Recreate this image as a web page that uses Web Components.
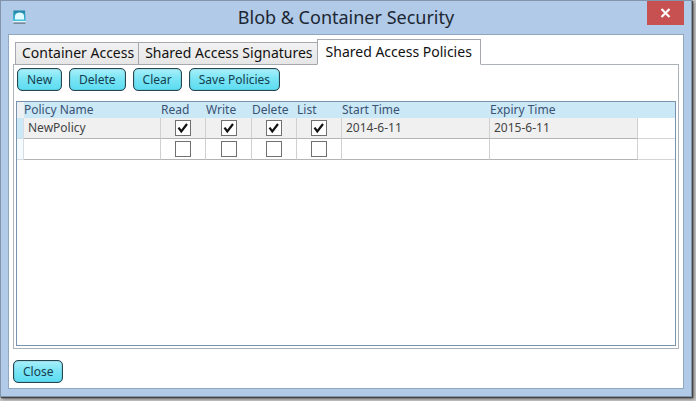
<!DOCTYPE html>
<html lang="en">
<head>
<meta charset="utf-8">
<title>Blob &amp; Container Security</title>
<style>
html, body { height: 100%; }
body { margin: 0; background: #c9c9c9; font-family: "Noto Sans", "Open Sans", sans-serif; font-size: 12px; color: #222; }
</style>
</head>
<body>
<app-window heading="Blob &amp; Container Security">
  <tab-group>
    <tab-item slot="tabs">Container Access</tab-item>
    <tab-item slot="tabs">Shared Access Signatures</tab-item>
    <tab-item slot="tabs" active>Shared Access Policies</tab-item>
    <tool-bar>
      <glossy-button>New</glossy-button>
      <glossy-button>Delete</glossy-button>
      <glossy-button>Clear</glossy-button>
      <glossy-button>Save Policies</glossy-button>
    </tool-bar>
    <policy-grid></policy-grid>
  </tab-group>
  <glossy-button slot="footer">Close</glossy-button>
</app-window>
<script>
function define(name, html, setup) {
  const template = document.createElement('template');
  template.innerHTML = html;
  customElements.define(name, class extends HTMLElement {
    constructor() {
      super();
      this.attachShadow({ mode: 'open' }).append(template.content.cloneNode(true));
    }
    connectedCallback() { if (setup) setup(this, this.shadowRoot); }
  });
}

define('app-window', `
<style>
:host { display: block; box-sizing: border-box; height: 100%; padding: 0 4px 4px 0; }
.frame { box-sizing: border-box; height: 100%; display: flex; flex-direction: column; background: #b0cae8; border: 1px solid #8295aa; padding: 0 7px 7px; box-shadow: 1px 1px 1px #444, 2px 2px 3px #666; }
header { flex: none; height: 33px; display: grid; grid-template-columns: 60px 1fr 60px; box-sizing: border-box; }
svg { display: block; }
.logo { margin: 8px 0 0 4px; }
h1 { margin: 0; text-align: center; font-size: 18px; line-height: 32px; font-weight: 400; color: #1c2733; white-space: nowrap; }
.close { justify-self: end; width: 37px; height: 24px; padding: 0; border: 0; background: #c75050; display: grid; place-items: center; }
main { flex: 1; min-height: 0; display: flex; flex-direction: column; background: #fff; border: 1px solid #91a7c0; box-sizing: border-box; padding: 4px 4px 5px; }
footer { flex: none; padding: 11px 0 0; display: flex; }
</style>
<div class="frame">
  <header>
    <svg class="logo" width="15" height="17" viewBox="0 0 15 17" aria-hidden="true">
      <defs><linearGradient id="g" x2="0" y2="1"><stop stop-color="#1e83a5"/><stop offset="1" stop-color="#48c4e2"/></linearGradient></defs>
      <path d="M1.500 1.500h11.500l.8 10.500H.8z" fill="url(#g)"/>
      <path d="M3 10.500V6.500Q3.500 4 7.300 3.500q4.200 0 4.700 3v4z" fill="#e2fbff"/>
      <path d="M.8 12h13v1.500H.8z" fill="#e9f0f3"/><path d="M1.500 13.500h12v1.300h-12z" fill="#66788b"/>
    </svg>
    <h1></h1>
    <button class="close" aria-label="Close window"><svg width="11" height="10" viewBox="0 0 11 10"><path d="M1.500 1l8 8M9.500 1l-8 8" stroke="#fff" stroke-width="2.200"/></svg></button>
  </header>
  <main><slot></slot><footer><slot name="footer"></slot></footer></main>
</div>`, (el, root) => { root.querySelector('h1').textContent = el.getAttribute('heading'); });

define('tab-group', `
<style>
:host { flex: 1; min-height: 0; display: flex; flex-direction: column; }
.tabs { flex: none; display: flex; align-items: flex-end; padding: 0 2px; position: relative; }
.panel { flex: 1; min-height: 0; display: flex; flex-direction: column; border: 1px solid #acb2b8; margin-top: -1px; padding: 3px 2px 2px; }
</style>
<div class="tabs" role="tablist"><slot name="tabs"></slot></div>
<div class="panel" role="tabpanel"><slot></slot></div>`);

define('tab-item', `
<style>
:host { display: block; margin-right: -1px; }
button { display: block; box-sizing: border-box; height: 23px; padding: 0 4px 3px 6px; border: 1px solid #a5a8ac; background: linear-gradient(#f2f2f2, #e6e6e6); font: inherit; font-size: 14px; line-height: 20px; color: #111; white-space: nowrap; }
:host([active]) button { height: 26px; padding: 0 8px; background: #fff; border-bottom-color: #fff; }
</style>
<button role="tab"><slot></slot></button>`, (el, root) => {
  root.querySelector('button').setAttribute('aria-selected', el.hasAttribute('active'));
});

define('tool-bar', `
<style>:host { flex: none; display: flex; gap: 7px; padding: 0 1px; }</style><slot></slot>`);

define('glossy-button', `
<style>
:host { display: block; }
button { display: block; box-sizing: border-box; height: 23px; padding: 0 9px; border: 1px solid #27464f; border-radius: 5px; background: linear-gradient(#a9effa, #7be5f5 45%, #5cdcf1); box-shadow: inset 0 0 1px #27464f; font: inherit; line-height: 20px; color: #153e50; white-space: nowrap; }
</style>
<button type="button"><slot></slot></button>`);

define('check-box', `
<style>
:host { display: block; width: 16px; height: 16px; margin: 0 auto; }
input { appearance: none; display: block; box-sizing: border-box; width: 16px; height: 16px; margin: 0; border: 1px solid #707070; background: #fff; }
label { display: grid; }
input, svg { grid-area: 1 / 1; }
svg { display: none; pointer-events: none; }
input:checked + svg { display: block; }
</style>
<label><input type="checkbox"><svg width="16" height="16" viewBox="0 0 16 16"><path d="M3.500 7.600l2.800 3.800L12 4" fill="none" stroke="#111" stroke-width="2.200"/></svg></label>`, (el, root) => {
  const input = root.querySelector('input');
  input.checked = el.hasAttribute('checked');
  input.setAttribute('aria-label', el.getAttribute('name'));
});

define('policy-grid', `
<style>
:host { flex: 1; min-height: 0; display: block; margin-top: 10px; border: 1px solid #7893ad; }
table { width: 100%; table-layout: fixed; border-collapse: separate; border-spacing: 0; }
th, td { box-sizing: border-box; padding: 0; font-weight: 400; text-align: left; white-space: nowrap; }
th { height: 16px; line-height: 16px; background: #cbe8f6; color: #3a5273; }
th:first-child { background: #eef1f4; }
td { height: 21px; line-height: 20px; padding-left: 4px; border-right: 1px solid #d0d0d0; border-bottom: 1px solid #b4b4b4; color: #444; }
td.mark { background: #f4fbff; border-color: #d5dde3; }
.selected td { background: #f0f0f0; }
.selected td.mark { background: #cbe8f6; }
td:last-child, .selected td:last-child { background: #fff; border-right: 0; border-bottom-color: #d5d5d5; }
td.check { padding: 0; }
</style>
<table>
  <colgroup></colgroup>
  <thead><tr></tr></thead>
  <tbody></tbody>
</table>`, (el, root) => {
  const columns = [['', 7], ['Policy Name', 137], ['Read', 45], ['Write', 46], ['Delete', 45], ['List', 45], ['Start Time', 148], ['Expiry Time', 148], ['', 0]];
  const flags = ['Read', 'Write', 'Delete', 'List'];
  root.querySelector('colgroup').innerHTML = columns.map(([, w]) => w ? `<col style="width:${w}px">` : '<col>').join('');
  root.querySelector('thead tr').innerHTML = columns.map(([name]) => `<th scope="col">${name}</th>`).join('');
  const rows = [
    { name: 'NewPolicy', on: true, start: '2014-6-11', end: '2015-6-11' },
    { name: '', on: false, start: '', end: '' }
  ];
  root.querySelector('tbody').innerHTML = rows.map(r => `<tr class="${r.on ? 'selected' : ''}"><td class="mark"></td><td>${r.name}</td>${flags.map(f => `<td class="check"><check-box name="${f}"${r.on ? ' checked' : ''}></check-box></td>`).join('')}<td>${r.start}</td><td>${r.end}</td><td></td></tr>`).join('');
});
</script>
</body>
</html>
